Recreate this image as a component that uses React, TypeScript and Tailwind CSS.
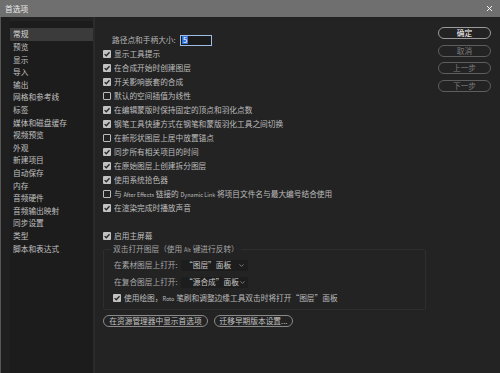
import { ChevronDown, X } from "lucide-react"

const sideItems = [
  "常规",
  "预览",
  "显示",
  "导入",
  "输出",
  "网格和参考线",
  "标签",
  "媒体和磁盘缓存",
  "视频预览",
  "外观",
  "新建项目",
  "自动保存",
  "内存",
  "音频硬件",
  "音频输出映射",
  "同步设置",
  "类型",
  "脚本和表达式",
]

const checks: [string | JSX.Element, boolean][] = [
  ["显示工具提示", true],
  ["在合成开始时创建图层", true],
  ["开关影响嵌套的合成", true],
  ["默认的空间插值为线性", false],
  ["在编辑蒙版时保持固定的顶点和羽化点数", true],
  ["钢笔工具快捷方式在钢笔和蒙版羽化工具之间切换", true],
  ["在新形状图层上居中放置锚点", false],
  ["同步所有相关项目的时间", true],
  ["在原始图层上创建拆分图层", true],
  ["使用系统拾色器", true],
  [
    <>
      与 <span className="text-[5.5px]">After Effects</span> 链接的{" "}
      <span className="text-[5.5px]">Dynamic Link</span> 将项目文件名与最大编号结合使用
    </>,
    false,
  ],
  ["在渲染完成时播放声音", true],
]

function Check({ on }: { on: boolean }) {
  return on ? (
    <span className="grid h-[8px] w-[8px] shrink-0 place-items-center rounded-[1px] bg-[#c2c2c2]">
      <svg viewBox="0 0 8 8" className="h-[8px] w-[8px]">
        <path d="M1.6 4.1 L3.3 5.8 L6.5 2.2" stroke="#262626" strokeWidth="1.3" fill="none" />
      </svg>
    </span>
  ) : (
    <span className="h-[8px] w-[8px] shrink-0 rounded-[1px] border border-[#bdbdbd]" />
  )
}

function Row({ label, on }: { label: string | JSX.Element; on: boolean }) {
  return (
    <div className="flex h-[14px] items-center gap-[3px] whitespace-nowrap">
      <Check on={on} />
      <span>{label}</span>
    </div>
  )
}

function Pick({ label, value }: { label: string; value: string }) {
  return (
    <div className="flex h-[14px] items-center whitespace-nowrap">
      <span className="w-[67px] text-[#a9a9a9]">{label}</span>
      <span className="flex h-[11px] w-[67px] items-center justify-between rounded-[1px] bg-[#1d1d1d] pl-[4px] pr-[3px] text-[#c8c8c8]">
        <span>{value}</span>
        <ChevronDown className="h-[7px] w-[7px] shrink-0 text-[#9a9a9a]" strokeWidth={2.5} />
      </span>
    </div>
  )
}

export default function App() {
  return (
    <div className="flex h-[373px] w-[500px] flex-col overflow-hidden bg-[#232323] font-['Noto_Sans_CJK_SC',sans-serif] text-[7.7px] leading-none text-[#bdbdbd]">
      <div className="flex h-[17px] shrink-0 items-center justify-between bg-[#6f6f6f] pl-[5px] pr-[6px] text-[#ececec]">
        <span>首选项</span>
        <X className="h-[9px] w-[9px] text-white" strokeWidth={2.5} />
      </div>

      <div className="flex flex-1">
        <div className="w-[10px] border-l border-[#555] bg-[#1f1f1f]" />
        <div className="mt-[4px] w-[83px] bg-[#1c1c1c] pt-[7px]">
          {sideItems.map((item, i) => (
            <div
              key={i}
              className={`flex h-[12.6px] items-center pl-[3px] ${
                i === 0 ? "bg-[#3b3b3b] text-[#dcdcdc]" : "text-[#c0c0c0]"
              }`}
            >
              {item}
            </div>
          ))}
        </div>
        <div className="w-[2px] bg-[#2b2b2b]" />

        <div className="flex flex-1 pl-[8px] pr-[9px]">
          <div className="flex flex-1 flex-col pt-[16px]">
            <div className="flex h-[14px] items-center pl-[9px]">
              <span className="w-[68px] text-[#b4b4b4]">路径点和手柄大小:</span>
              <span className="flex h-[11px] w-[32px] items-center border border-[#9dbde6] bg-[#1b1b1b] px-[1px]">
                <span className="bg-[#2f6fd6] px-[1px] text-white">5</span>
              </span>
            </div>
            {checks.map(([label, on], i) => (
              <Row key={i} label={label} on={on} />
            ))}
            <div className="h-[14px]" />
            <Row label="启用主屏幕" on={true} />

            <fieldset className="mr-[12px] mt-0 rounded-[2px] border border-[#2e2e2e] pb-[4px] pl-[10px] pr-[4px]">
              <legend className="ml-[-3px] px-[2px] leading-[12px] text-[#a6a6a6]">
                双击打开图层（使用 <span className="text-[5.5px]">Alt</span> 键进行反转）
              </legend>
              <div className="mt-[2px] flex flex-col gap-[3px]">
                <Pick label="在素材图层上打开:" value="“图层”面板" />
                <Pick label="在复合图层上打开:" value="“源合成”面板" />
              </div>
              <div className="-ml-[1px] mt-[2px]">
                <Row
                  label={
                    <>
                      使用绘图，<span className="text-[5.5px]">Roto</span> 笔刷和调整边缘工具双击时将打开“图层”面板
                    </>
                  }
                  on={true}
                />
              </div>
            </fieldset>

            <div className="mt-[5px] flex gap-[6px]">
              <button className="flex h-[12px] w-[105px] items-center justify-center rounded-full border border-[#8a8a8a] text-[#c4c4c4]">
                在资源管理器中显示首选项
              </button>
              <button className="flex h-[12px] w-[79px] items-center justify-center rounded-full border border-[#8a8a8a] text-[#c4c4c4]">
                迁移早期版本设置...
              </button>
            </div>
          </div>

          <div className="flex w-[53px] flex-col gap-[5.5px] pt-[10px]">
            <button className="flex h-[12px] items-center justify-center rounded-full border border-[#9a9a9a] text-white">
              确定
            </button>
            <button className="flex h-[12px] items-center justify-center rounded-full border border-[#5e5e5e] text-[#7c7c7c]">
              取消
            </button>
            <button className="flex h-[12px] items-center justify-center rounded-full border border-[#5e5e5e] text-[#7c7c7c]">
              上一步
            </button>
            <button className="flex h-[12px] items-center justify-center rounded-full border border-[#5e5e5e] text-[#7c7c7c]">
              下一步
            </button>
          </div>
        </div>
      </div>
    </div>
  )
}
